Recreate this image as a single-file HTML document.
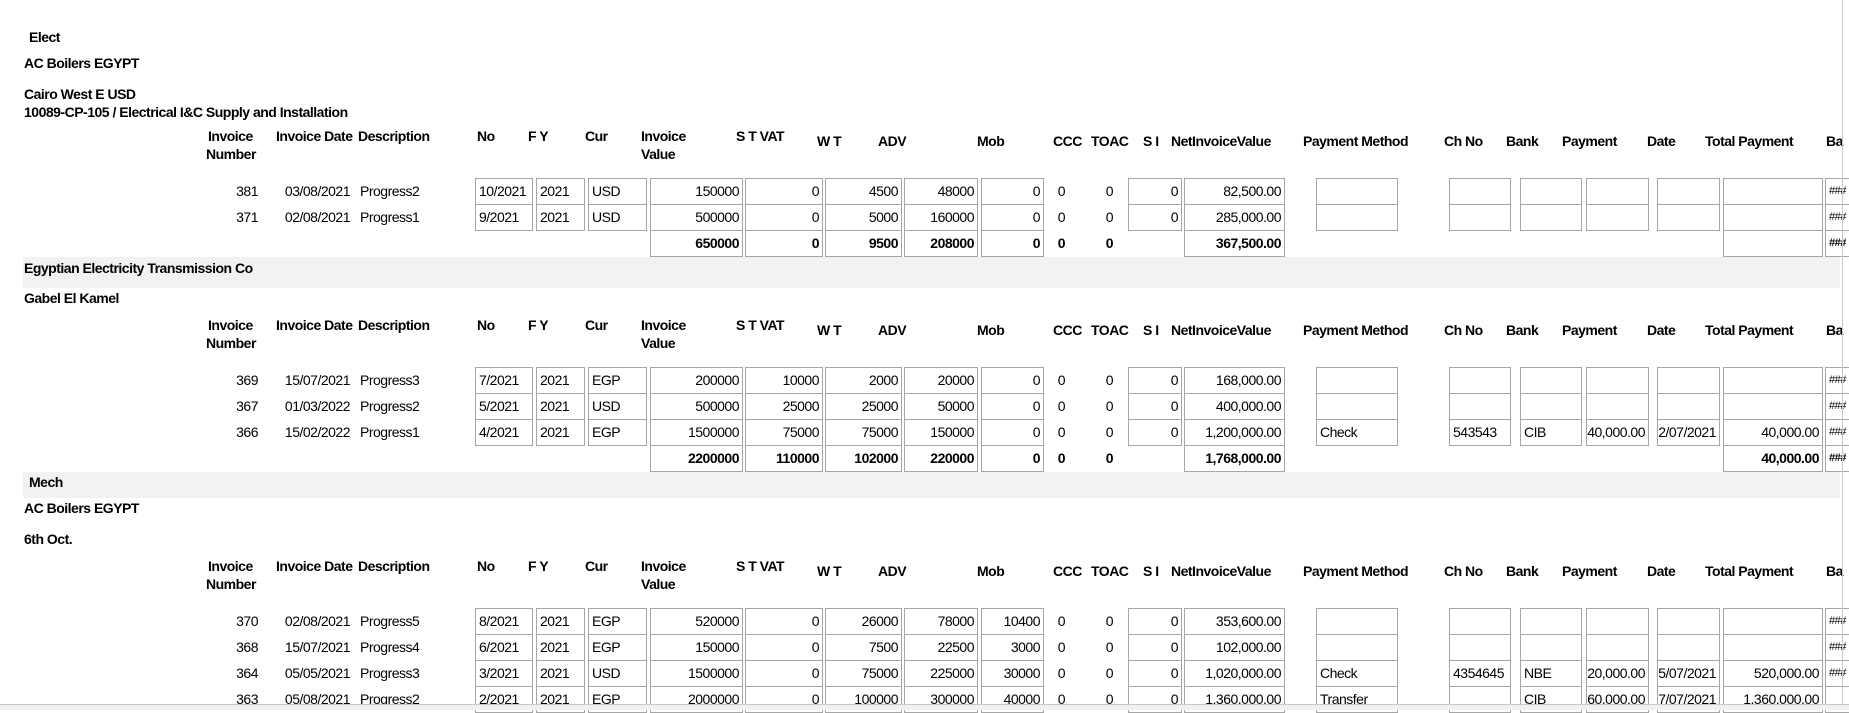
<!DOCTYPE html>
<html><head><meta charset="utf-8"><style>
body{margin:0;width:1849px;height:709px;overflow:hidden;background:#fff;position:relative;font-family:"Liberation Sans",Arial,sans-serif;font-size:14px;color:#000;letter-spacing:-0.5px}
.a{position:absolute;white-space:nowrap;line-height:18px}
.h{font-weight:bold}
.band{position:absolute;left:23px;width:1817px;background:#f2f2f2}
.b{position:absolute;box-sizing:border-box;height:27px;border:1px solid #a6a6a6;line-height:25px;padding:0 3px;overflow:hidden;white-space:nowrap;display:flex;justify-content:flex-start}
.b.r{justify-content:flex-end}
.t{position:absolute;height:26px;line-height:26px;white-space:nowrap;text-align:right}
.bo{font-weight:bold}
.no{left:475px;width:58px}.fy{left:536px;width:49px}.cur{left:588px;width:59px}
.iv{left:650px;width:93px}.st{left:745px;width:78px}.wt{left:825px;width:77px}
.adv{left:904px;width:74px}.mob{left:981px;width:63px}.si{left:1128px;width:54px}
.net{left:1184px;width:101px}.pm{left:1316px;width:82px}.ch{left:1449px;width:62px}
.bk{left:1520px;width:62px}.pay{left:1586px;width:63px}.dt{left:1657px;width:63px}
.tp{left:1723px;width:100px}.ba{left:1825px;width:40px;font-size:11px}
.n1{left:200px;width:58px}.n2{left:270px;width:80px}.n3{left:360px;text-align:left}
.ccc{left:1035px;width:30px}.toac{left:1083px;width:30px}
.sb{position:absolute;left:1842px;top:0;width:1px;height:709px;background:#c8c8c8}
.hs{position:absolute;left:0;top:704px;width:1849px;height:5px;background:#f0f0f0;border-top:1px solid #c8c8c8}
</style></head><body>

<div class="a h" style="left:29px;top:28px">Elect</div>
<div class="a h" style="left:24px;top:54px">AC Boilers EGYPT</div>
<div class="a h" style="left:24px;top:85px">Cairo West E USD</div>
<div class="a h" style="left:24px;top:103px">10089-CP-105 / Electrical I&amp;C Supply and Installation</div>

<div style="position:absolute;left:0;top:127px">
<div class="a h" style="left:208px;top:0">Invoice</div><div class="a h" style="left:206px;top:18px">Number</div>
<div class="a h" style="left:276px;top:0">Invoice Date</div>
<div class="a h" style="left:358px;top:0">Description</div>
<div class="a h" style="left:477px;top:0">No</div>
<div class="a h" style="left:528px;top:0">F Y</div>
<div class="a h" style="left:585px;top:0">Cur</div>
<div class="a h" style="left:641px;top:0">Invoice</div><div class="a h" style="left:641px;top:18px">Value</div>
<div class="a h" style="left:736px;top:0">S T VAT</div>
<div class="a h" style="left:817px;top:5px">W T</div>
<div class="a h" style="left:878px;top:5px">ADV</div>
<div class="a h" style="left:977px;top:5px">Mob</div>
<div class="a h" style="left:1053px;top:5px">CCC</div>
<div class="a h" style="left:1091px;top:5px">TOAC</div>
<div class="a h" style="left:1143px;top:5px">S I</div>
<div class="a h" style="left:1171px;top:5px">NetInvoiceValue</div>
<div class="a h" style="left:1303px;top:5px">Payment Method</div>
<div class="a h" style="left:1444px;top:5px">Ch No</div>
<div class="a h" style="left:1506px;top:5px">Bank</div>
<div class="a h" style="left:1562px;top:5px">Payment</div>
<div class="a h" style="left:1647px;top:5px">Date</div>
<div class="a h" style="left:1705px;top:5px">Total Payment</div>
<div class="a h" style="left:1826px;top:5px">Ba</div>
</div>

<div style="position:absolute;left:0;top:178px">
<div class="t n1">381</div><div class="t n2">03/08/2021</div><div class="t n3">Progress2</div>
<div class="b no">10/2021</div><div class="b fy">2021</div><div class="b cur">USD</div>
<div class="b r iv">150000</div><div class="b r st">0</div><div class="b r wt">4500</div><div class="b r adv">48000</div><div class="b r mob">0</div>
<div class="t ccc">0</div><div class="t toac">0</div><div class="b r si">0</div><div class="b r net">82,500.00</div>
<div class="b pm"></div><div class="b ch"></div><div class="b bk"></div><div class="b pay"></div><div class="b dt"></div><div class="b tp"></div><div class="b ba">###</div>
</div>
<div style="position:absolute;left:0;top:204px">
<div class="t n1">371</div><div class="t n2">02/08/2021</div><div class="t n3">Progress1</div>
<div class="b no">9/2021</div><div class="b fy">2021</div><div class="b cur">USD</div>
<div class="b r iv">500000</div><div class="b r st">0</div><div class="b r wt">5000</div><div class="b r adv">160000</div><div class="b r mob">0</div>
<div class="t ccc">0</div><div class="t toac">0</div><div class="b r si">0</div><div class="b r net">285,000.00</div>
<div class="b pm"></div><div class="b ch"></div><div class="b bk"></div><div class="b pay"></div><div class="b dt"></div><div class="b tp"></div><div class="b ba">###</div>
</div>
<div class="bo" style="position:absolute;left:0;top:230px">
<div class="b r iv">650000</div><div class="b r st">0</div><div class="b r wt">9500</div><div class="b r adv">208000</div><div class="b r mob">0</div>
<div class="t ccc">0</div><div class="t toac">0</div><div class="b r net">367,500.00</div>
<div class="b tp"></div><div class="b ba">###</div>
</div>

<div class="band" style="top:257px;height:31px"></div>
<div class="a h" style="left:24px;top:259px">Egyptian Electricity Transmission Co</div>
<div class="a h" style="left:24px;top:289px">Gabel El Kamel</div>

<div style="position:absolute;left:0;top:316px">
<div class="a h" style="left:208px;top:0">Invoice</div><div class="a h" style="left:206px;top:18px">Number</div>
<div class="a h" style="left:276px;top:0">Invoice Date</div>
<div class="a h" style="left:358px;top:0">Description</div>
<div class="a h" style="left:477px;top:0">No</div>
<div class="a h" style="left:528px;top:0">F Y</div>
<div class="a h" style="left:585px;top:0">Cur</div>
<div class="a h" style="left:641px;top:0">Invoice</div><div class="a h" style="left:641px;top:18px">Value</div>
<div class="a h" style="left:736px;top:0">S T VAT</div>
<div class="a h" style="left:817px;top:5px">W T</div>
<div class="a h" style="left:878px;top:5px">ADV</div>
<div class="a h" style="left:977px;top:5px">Mob</div>
<div class="a h" style="left:1053px;top:5px">CCC</div>
<div class="a h" style="left:1091px;top:5px">TOAC</div>
<div class="a h" style="left:1143px;top:5px">S I</div>
<div class="a h" style="left:1171px;top:5px">NetInvoiceValue</div>
<div class="a h" style="left:1303px;top:5px">Payment Method</div>
<div class="a h" style="left:1444px;top:5px">Ch No</div>
<div class="a h" style="left:1506px;top:5px">Bank</div>
<div class="a h" style="left:1562px;top:5px">Payment</div>
<div class="a h" style="left:1647px;top:5px">Date</div>
<div class="a h" style="left:1705px;top:5px">Total Payment</div>
<div class="a h" style="left:1826px;top:5px">Ba</div>
</div>

<div style="position:absolute;left:0;top:367px">
<div class="t n1">369</div><div class="t n2">15/07/2021</div><div class="t n3">Progress3</div>
<div class="b no">7/2021</div><div class="b fy">2021</div><div class="b cur">EGP</div>
<div class="b r iv">200000</div><div class="b r st">10000</div><div class="b r wt">2000</div><div class="b r adv">20000</div><div class="b r mob">0</div>
<div class="t ccc">0</div><div class="t toac">0</div><div class="b r si">0</div><div class="b r net">168,000.00</div>
<div class="b pm"></div><div class="b ch"></div><div class="b bk"></div><div class="b pay"></div><div class="b dt"></div><div class="b tp"></div><div class="b ba">###</div>
</div>
<div style="position:absolute;left:0;top:393px">
<div class="t n1">367</div><div class="t n2">01/03/2022</div><div class="t n3">Progress2</div>
<div class="b no">5/2021</div><div class="b fy">2021</div><div class="b cur">USD</div>
<div class="b r iv">500000</div><div class="b r st">25000</div><div class="b r wt">25000</div><div class="b r adv">50000</div><div class="b r mob">0</div>
<div class="t ccc">0</div><div class="t toac">0</div><div class="b r si">0</div><div class="b r net">400,000.00</div>
<div class="b pm"></div><div class="b ch"></div><div class="b bk"></div><div class="b pay"></div><div class="b dt"></div><div class="b tp"></div><div class="b ba">###</div>
</div>
<div style="position:absolute;left:0;top:419px">
<div class="t n1">366</div><div class="t n2">15/02/2022</div><div class="t n3">Progress1</div>
<div class="b no">4/2021</div><div class="b fy">2021</div><div class="b cur">EGP</div>
<div class="b r iv">1500000</div><div class="b r st">75000</div><div class="b r wt">75000</div><div class="b r adv">150000</div><div class="b r mob">0</div>
<div class="t ccc">0</div><div class="t toac">0</div><div class="b r si">0</div><div class="b r net">1,200,000.00</div>
<div class="b pm">Check</div><div class="b ch">543543</div><div class="b bk">CIB</div><div class="b r pay">40,000.00</div><div class="b r dt">12/07/2021</div><div class="b r tp">40,000.00</div><div class="b ba">###</div>
</div>
<div class="bo" style="position:absolute;left:0;top:445px">
<div class="b r iv">2200000</div><div class="b r st">110000</div><div class="b r wt">102000</div><div class="b r adv">220000</div><div class="b r mob">0</div>
<div class="t ccc">0</div><div class="t toac">0</div><div class="b r net">1,768,000.00</div>
<div class="b r tp">40,000.00</div><div class="b ba">###</div>
</div>

<div class="band" style="top:472px;height:26px"></div>
<div class="a h" style="left:29px;top:473px">Mech</div>
<div class="a h" style="left:24px;top:499px">AC Boilers EGYPT</div>
<div class="a h" style="left:24px;top:530px">6th Oct.</div>

<div style="position:absolute;left:0;top:557px">
<div class="a h" style="left:208px;top:0">Invoice</div><div class="a h" style="left:206px;top:18px">Number</div>
<div class="a h" style="left:276px;top:0">Invoice Date</div>
<div class="a h" style="left:358px;top:0">Description</div>
<div class="a h" style="left:477px;top:0">No</div>
<div class="a h" style="left:528px;top:0">F Y</div>
<div class="a h" style="left:585px;top:0">Cur</div>
<div class="a h" style="left:641px;top:0">Invoice</div><div class="a h" style="left:641px;top:18px">Value</div>
<div class="a h" style="left:736px;top:0">S T VAT</div>
<div class="a h" style="left:817px;top:5px">W T</div>
<div class="a h" style="left:878px;top:5px">ADV</div>
<div class="a h" style="left:977px;top:5px">Mob</div>
<div class="a h" style="left:1053px;top:5px">CCC</div>
<div class="a h" style="left:1091px;top:5px">TOAC</div>
<div class="a h" style="left:1143px;top:5px">S I</div>
<div class="a h" style="left:1171px;top:5px">NetInvoiceValue</div>
<div class="a h" style="left:1303px;top:5px">Payment Method</div>
<div class="a h" style="left:1444px;top:5px">Ch No</div>
<div class="a h" style="left:1506px;top:5px">Bank</div>
<div class="a h" style="left:1562px;top:5px">Payment</div>
<div class="a h" style="left:1647px;top:5px">Date</div>
<div class="a h" style="left:1705px;top:5px">Total Payment</div>
<div class="a h" style="left:1826px;top:5px">Ba</div>
</div>

<div style="position:absolute;left:0;top:608px">
<div class="t n1">370</div><div class="t n2">02/08/2021</div><div class="t n3">Progress5</div>
<div class="b no">8/2021</div><div class="b fy">2021</div><div class="b cur">EGP</div>
<div class="b r iv">520000</div><div class="b r st">0</div><div class="b r wt">26000</div><div class="b r adv">78000</div><div class="b r mob">10400</div>
<div class="t ccc">0</div><div class="t toac">0</div><div class="b r si">0</div><div class="b r net">353,600.00</div>
<div class="b pm"></div><div class="b ch"></div><div class="b bk"></div><div class="b pay"></div><div class="b dt"></div><div class="b tp"></div><div class="b ba">###</div>
</div>
<div style="position:absolute;left:0;top:634px">
<div class="t n1">368</div><div class="t n2">15/07/2021</div><div class="t n3">Progress4</div>
<div class="b no">6/2021</div><div class="b fy">2021</div><div class="b cur">EGP</div>
<div class="b r iv">150000</div><div class="b r st">0</div><div class="b r wt">7500</div><div class="b r adv">22500</div><div class="b r mob">3000</div>
<div class="t ccc">0</div><div class="t toac">0</div><div class="b r si">0</div><div class="b r net">102,000.00</div>
<div class="b pm"></div><div class="b ch"></div><div class="b bk"></div><div class="b pay"></div><div class="b dt"></div><div class="b tp"></div><div class="b ba">###</div>
</div>
<div style="position:absolute;left:0;top:660px">
<div class="t n1">364</div><div class="t n2">05/05/2021</div><div class="t n3">Progress3</div>
<div class="b no">3/2021</div><div class="b fy">2021</div><div class="b cur">USD</div>
<div class="b r iv">1500000</div><div class="b r st">0</div><div class="b r wt">75000</div><div class="b r adv">225000</div><div class="b r mob">30000</div>
<div class="t ccc">0</div><div class="t toac">0</div><div class="b r si">0</div><div class="b r net">1,020,000.00</div>
<div class="b pm">Check</div><div class="b ch">4354645</div><div class="b bk">NBE</div><div class="b r pay">520,000.00</div><div class="b r dt">15/07/2021</div><div class="b r tp">520,000.00</div><div class="b ba">###</div>
</div>
<div style="position:absolute;left:0;top:686px">
<div class="t n1">363</div><div class="t n2">05/08/2021</div><div class="t n3">Progress2</div>
<div class="b no">2/2021</div><div class="b fy">2021</div><div class="b cur">EGP</div>
<div class="b r iv">2000000</div><div class="b r st">0</div><div class="b r wt">100000</div><div class="b r adv">300000</div><div class="b r mob">40000</div>
<div class="t ccc">0</div><div class="t toac">0</div><div class="b r si">0</div><div class="b r net">1,360,000.00</div>
<div class="b pm">Transfer</div><div class="b ch"></div><div class="b bk">CIB</div><div class="b r pay">1,360,000.00</div><div class="b r dt">27/07/2021</div><div class="b r tp">1,360,000.00</div><div class="b ba"></div>
</div>

<div class="sb"></div>
<div class="hs"></div>
</body></html>
